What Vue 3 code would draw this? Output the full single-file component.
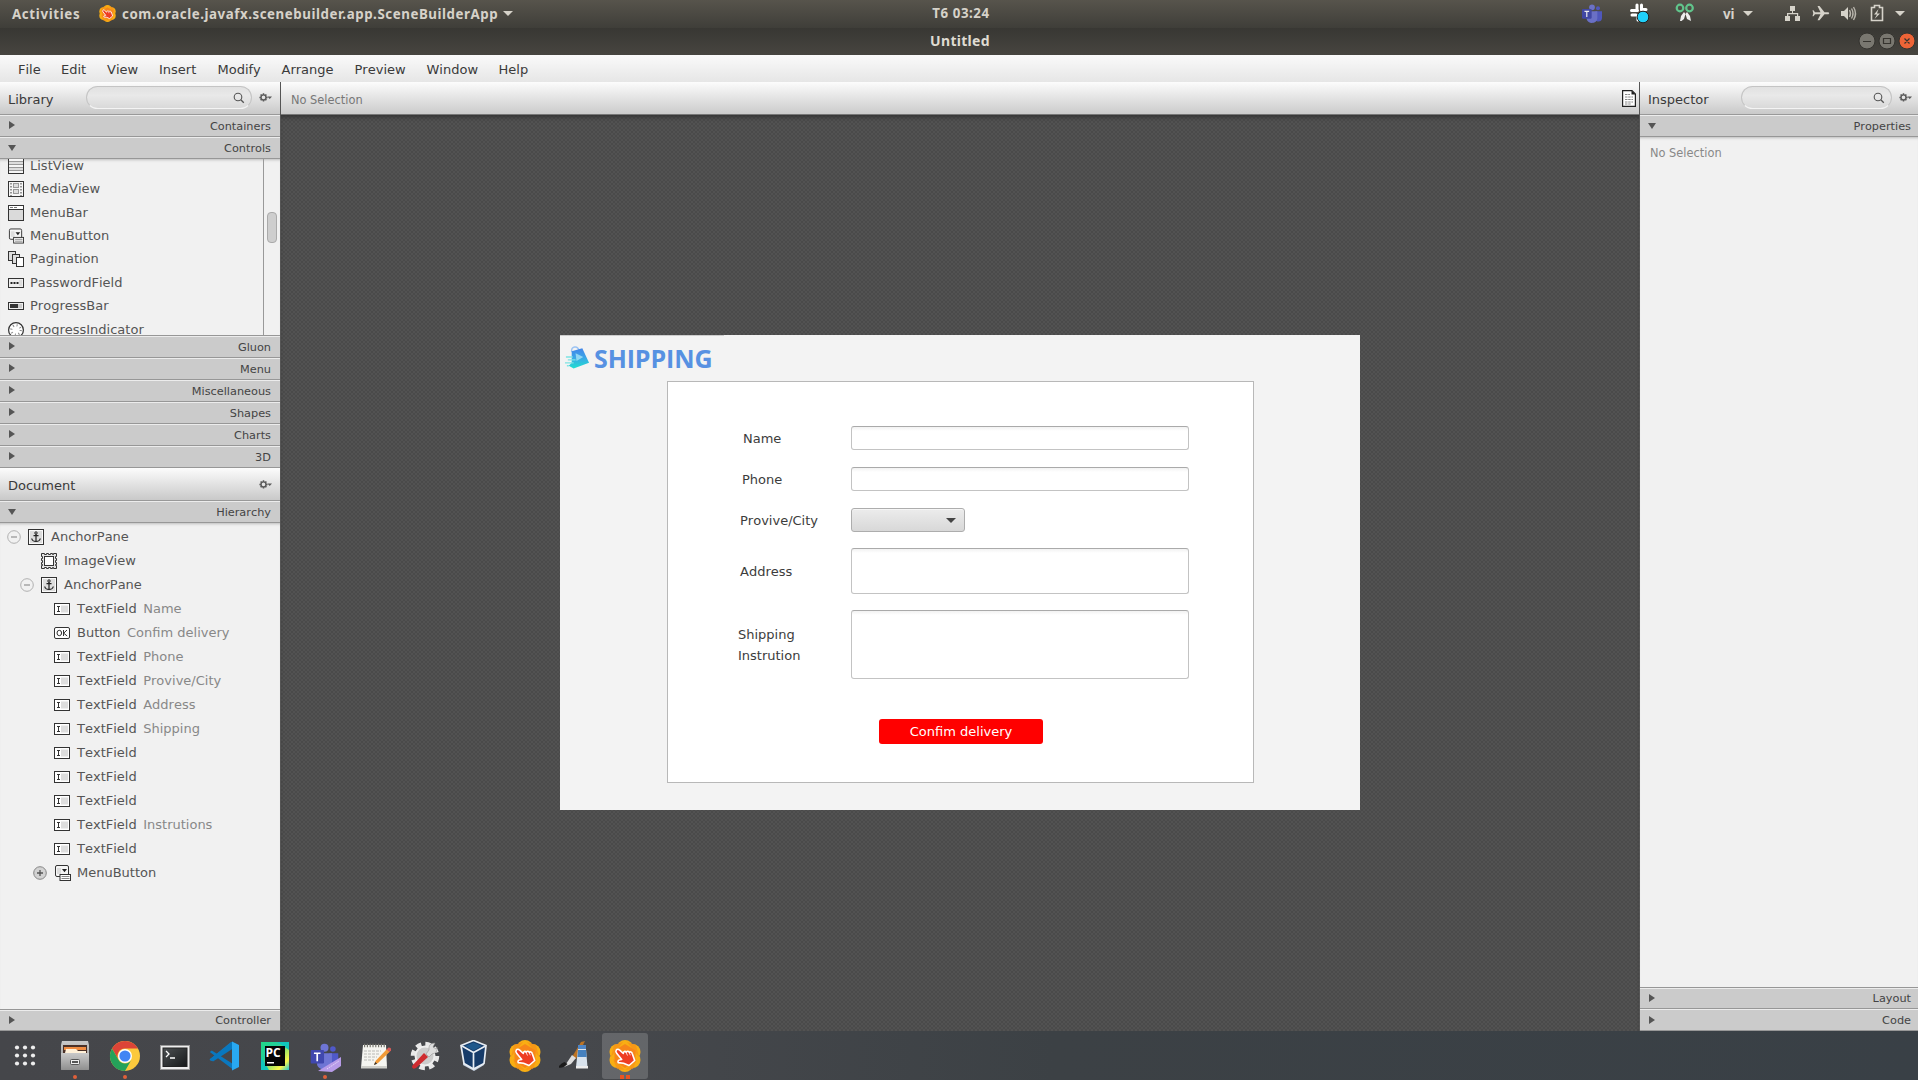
<script setup>
const menus = ['File', 'Edit', 'View', 'Insert', 'Modify', 'Arrange', 'Preview', 'Window', 'Help']
const menuWidths = [43, 46, 52, 58.5, 64, 73, 72, 72, 50]
const controls = [
  ['ListView', 'list'],
  ['MediaView', 'media'],
  ['MenuBar', 'menubar'],
  ['MenuButton', 'menubutton'],
  ['Pagination', 'pages'],
  ['PasswordField', 'password'],
  ['ProgressBar', 'progress'],
  ['ProgressIndicator', 'dial'],
]
const sections = ['Gluon', 'Menu', 'Miscellaneous', 'Shapes', 'Charts', '3D']
const tree = [
  { l: 0, t: 'AnchorPane', i: 'anchor', x: 'minus' },
  { l: 1, t: 'ImageView', i: 'image' },
  { l: 1, t: 'AnchorPane', i: 'anchor', x: 'minus' },
  { l: 2, t: 'TextField', i: 'text', n: 'Name' },
  { l: 2, t: 'Button', i: 'ok', n: 'Confim delivery' },
  { l: 2, t: 'TextField', i: 'text', n: 'Phone' },
  { l: 2, t: 'TextField', i: 'text', n: 'Provive/City' },
  { l: 2, t: 'TextField', i: 'text', n: 'Address' },
  { l: 2, t: 'TextField', i: 'text', n: 'Shipping' },
  { l: 2, t: 'TextField', i: 'text' },
  { l: 2, t: 'TextField', i: 'text' },
  { l: 2, t: 'TextField', i: 'text' },
  { l: 2, t: 'TextField', i: 'text', n: 'Instrutions' },
  { l: 2, t: 'TextField', i: 'text' },
  { l: 2, t: 'MenuButton', i: 'menubutton', x: 'plus' },
]
const dock = ['grid', 'files', 'chrome', 'terminal', 'vscode', 'pycharm', 'teams', 'notes', 'tools', 'vbox', 'scene', 'paint', 'scene']
const running = [1, 2, 6]
</script>

<template>
  <svg width="0" height="0" class="defs">
    <defs>
      <linearGradient id="metal" x1="0" y1="0" x2="0" y2="1"><stop offset="0" stop-color="#c9c9c9" /><stop offset="1" stop-color="#8f8f8f" /></linearGradient>
      <linearGradient id="screen" x1="0" y1="0" x2="1" y2="1"><stop offset="0" stop-color="#4c5052" /><stop offset="1" stop-color="#17191a" /></linearGradient>
      <linearGradient id="pyc" x1="0" y1="0" x2="1" y2="1"><stop offset="0" stop-color="#21d789" /><stop offset=".35" stop-color="#22cf9a" /><stop offset=".55" stop-color="#8be06b" /><stop offset=".8" stop-color="#fcf84a" /><stop offset="1" stop-color="#1fc8d8" /></linearGradient>
      <linearGradient id="bag" x1="0" y1="0" x2="0" y2="1"><stop offset="0" stop-color="#4285e8" /><stop offset=".45" stop-color="#3ba5e8" /><stop offset="1" stop-color="#1fe0cf" /></linearGradient>
      <symbol id="gear" viewBox="0 0 13 9">
        <path d="M4.5 .2v8.4M.4 4.4h8.2M1.6 1.5l5.8 5.8M7.4 1.5L1.6 7.3" stroke="#5a5a5a" stroke-width="1.5" />
        <circle cx="4.5" cy="4.4" r="2.5" fill="#e5e5e5" stroke="#5a5a5a" stroke-width="1.4" /><path d="M8.4 3.4h4.6l-2.3 2.7z" fill="#5a5a5a" />
      </symbol>
      <symbol id="mag" viewBox="0 0 12 12"><circle cx="5" cy="5" r="3.8" fill="none" stroke="#555" stroke-width="1.1" /><path d="M7.8 7.8l3 3" stroke="#555" stroke-width="1.3" /></symbol>
      <symbol id="scene" viewBox="0 0 32 32">
        <g fill="#f9ae13"><circle cx="16" cy="8" r="8" /><circle cx="8.5" cy="12" r="8" /><circle cx="23.5" cy="12" r="8" /><circle cx="8.5" cy="20" r="8" /><circle cx="23.5" cy="20" r="8" /><circle cx="16" cy="24" r="8" /></g>
        <path d="M5 5l9-3-12 15zM27 5l-9-3 12 15zM8 29l8 1-12-11zM24 29l-8 1 12-11z" fill="#f79018" opacity=".75" />
        <path d="M16 4l10.500 6.500v11L16 28 5.500 21.500v-11z" fill="#f7861a" />
        <path d="M7.200 10.200c1-1.500 2.500-1 3.500 0l3.600 3.300c0-2.300 1.900-2.700 2.900-1.300 1-1.400 2.600-1.200 3.100.2 1-.9 2.500-.5 2.800.8l2.600 7.300-5.700 5-5.500-2.300-5.300-.6c-.6-1.500.2-2.600 1.800-2.800l1.700-.3-5-6.300c-.9-1-1.100-2-.5-3z" fill="#ee3d23" stroke="#fff" stroke-width="1.600" stroke-linejoin="round" />
        <path d="M17.200 12.500l1.300 3M20.300 12.700l1 2.600" stroke="#fff" stroke-width=".8" />
      </symbol>
      <symbol id="teams" viewBox="0 0 30 30">
        <circle cx="15" cy="5" r="4.3" fill="#6e75d4" /><circle cx="24" cy="6.5" r="3" fill="#5059c9" />
        <path d="M20 11h10v10c0 6-7 7-10 3z" fill="#5059c9" /><path d="M7 11h16v10c0 9-14 10-16 2z" fill="#6e75d4" />
        <rect x="0" y="7.500" width="14.500" height="14.500" rx="1.200" fill="#4048ae" /><path d="M3.700 11h7M7.200 11v8.500" stroke="#fff" stroke-width="1.800" />
      </symbol>
      <symbol id="i-list" viewBox="0 0 16 16"><path d="M.5.500h15v15H.5z" fill="#f6f6f6" /><path d="M1 4h14v3H1zM1 10h14v3H1z" fill="#ddd" /><path d="M1 3.500h14M1 6.500h14M1 9.500h14M1 12.500h14" stroke="#999" /><rect x=".5" y=".5" width="15" height="15" fill="none" stroke="#333" /></symbol>
      <symbol id="i-media" viewBox="0 0 16 16"><rect x=".5" y=".5" width="15" height="15" fill="#f6f6f6" stroke="#333" /><path d="M3 2v13M13 2v13" stroke="#777" stroke-width="1.500" stroke-dasharray="1.500 1.500" /><rect x="5.500" y="2.500" width="5" height="4" fill="#ddd" stroke="#999" /><rect x="5.500" y="8.500" width="5" height="4" fill="#ddd" stroke="#999" /></symbol>
      <symbol id="i-menubar" viewBox="0 0 16 16"><rect x=".5" y=".5" width="15" height="15" fill="#dadada" stroke="#333" /><path d="M1 1h14v3H1z" fill="#fff" /><path d="M1 4.500h14" stroke="#333" /><path d="M2 2.500h3M6 2.500h3" stroke="#777" /></symbol>
      <symbol id="i-menubutton" viewBox="0 0 17 16"><rect x="1.500" y=".5" width="13" height="11" rx="1.500" fill="#f5f5f5" stroke="#333" /><path d="M3 3h4v6H3z" fill="#ddd" /><path d="M8 4h5l-2.500 3.200z" fill="#222" /><rect x="6" y="9.500" width="10.500" height="6" fill="#fff" stroke="#333" /><path d="M7.500 11.500h8M7.500 13.500h8" stroke="#888" /></symbol>
      <symbol id="i-pages" viewBox="0 0 16 16"><rect x=".5" y=".5" width="7" height="9" fill="#ddd" stroke="#333" /><rect x="4.500" y="3.500" width="7" height="9" fill="#ddd" stroke="#333" /><rect x="8.500" y="6.500" width="7" height="9" fill="#fff" stroke="#333" /></symbol>
      <symbol id="i-password" viewBox="0 0 16 16"><rect x=".5" y="3.500" width="15" height="9" fill="#eee" stroke="#333" /><path d="M2.500 8h8" stroke="#222" stroke-width="2" stroke-dasharray="2 1" /><path d="M11 5h3v6h-3z" fill="#ddd" /></symbol>
      <symbol id="i-progress" viewBox="0 0 16 16"><rect x=".5" y="4.500" width="15" height="7" fill="#eee" stroke="#333" /><path d="M2 6h8v4H2z" fill="#333" /><path d="M10 6h4v4h-4z" fill="#ccc" /></symbol>
      <symbol id="i-dial" viewBox="0 0 16 16"><circle cx="8" cy="8" r="7.400" fill="#fff" stroke="#333" stroke-width="1.200" /><circle cx="8" cy="8" r="4.700" fill="none" stroke="#888" stroke-width="2.200" stroke-dasharray="1 2.700" /></symbol>
      <symbol id="i-anchor" viewBox="0 0 16 16"><rect x=".5" y=".5" width="15" height="15" fill="#fafafa" stroke="#333" /><path d="M2 2h12v12H2z" fill="#ddd" /><circle cx="8" cy="4" r="1.200" fill="none" stroke="#222" /><path d="M8 5v7.500M5.500 6.700h5M3.700 9.500c.5 2.500 2.500 3 4.300 3s3.800-.5 4.300-3" stroke="#222" stroke-width="1.200" fill="none" /></symbol>
      <symbol id="i-image" viewBox="0 0 16 16"><path d="M.5.500h3v1h2v-1h2v1h2v-1h2v1h1v-1h3v3h-1v2h1v2h-1v2h1v2h-1v1h1v3h-3v-1h-1v1h-2v-1h-2v1h-2v-1h-2v1h-3v-3h1v-1h-1v-2h1v-2h-1v-2h1v-2h-1z" fill="#e4e4e4" stroke="#333" /><rect x="3.500" y="3.500" width="9" height="9" fill="#fff" stroke="#333" /></symbol>
      <symbol id="i-text" viewBox="0 0 16 16"><rect x=".5" y="2.500" width="15" height="11" fill="#fff" stroke="#333" /><path d="M7 4.500h7v7H7z" fill="#ddd" /><path d="M3 5.500h3M4.500 5v6M3 10.500h3" stroke="#333" /></symbol>
      <symbol id="i-ok" viewBox="0 0 16 16"><rect x=".5" y="2.500" width="15" height="11" rx="1.500" fill="#fff" stroke="#333" /><ellipse cx="5.300" cy="8" rx="2.300" ry="2.700" fill="none" stroke="#333" /><path d="M9.500 5v6M13 5L9.700 8.200 13.200 11" stroke="#333" fill="none" /></symbol>
    </defs>
  </svg>

  <div class="desktop">
    <header class="topbar">
      <span class="activities">Activities</span>
      <svg class="applogo" width="17" height="17"><use href="#scene" /></svg>
      <span class="appname">com.oracle.javafx.scenebuilder.app.SceneBuilderApp</span>
      <i class="caret"></i>
      <span class="clock">T6 03:24</span>
      <div class="tray">
        <svg width="336" height="28" viewBox="0 0 336 28">
          <g transform="translate(-1 4)" opacity=".9"><svg width="22" height="20" viewBox="0 0 30 30"><use href="#teams" /></svg></g>
          <g stroke="#fff" stroke-width="3" stroke-linecap="round"><path d="M55 5v5M59.500 5v5M49.500 10.500h6M61 9.500h3M50 15h4M59 15h4M56 16v4" /></g>
          <circle cx="61" cy="17" r="5.800" fill="#1fd0fa" stroke="#222" />
          <g fill="none" stroke="#61c58c" stroke-width="2.200"><circle cx="98" cy="8" r="3.300" /><circle cx="107.500" cy="8" r="3.300" /></g>
          <path d="M98 21l1-5 3-4 1.500 2-1.500 5-2.500 2zM109 21l-1-5-3-4-1.500 2 1.500 5z" fill="#eee" />
          <path d="M161 11h10l-5 5zM313 11h10l-5 5z" fill="#d6d3ca" />
          <path d="M208 6h5v5h-5zM203 16h5v5h-5zM213 16h5v5h-5zM210 10h1v4h-1zM205 13h11v1.300h-11zM205 13h1.300v4H205zM215 13h1.200v4H215z" fill="#d6d3ca" />
          <path d="M233 12.300h5.500L235.500 6h2l5 6.300h4q1.500 1-0 2h-4l-5 6h-2l3-6H233l-1.500 2h-1l.8-3-.8-3h1z" fill="#d6d3ca" />
          <path d="M259 11h3l4-4v13l-4-4h-3z" fill="#d6d3ca" /><path d="M267.500 10q2 3.500 0 7M269.500 8.500q3 5 0 10M271.500 7q4 6.500 0 13" fill="none" stroke="#b8b5ac" stroke-width="1.400" />
          <path d="M289.500 8v12.500h11V7.500h-3V5.500h-5v2h-3z" fill="none" stroke="#d6d3ca" stroke-width="1.600" /><path d="M296.500 9l-4.500 5.500h3l-2.500 4.500 5.500-5.500h-3z" fill="#d6d3ca" />
        </svg>
        <span class="lang">vi</span>
      </div>
    </header>

    <div class="titlebar">
      <span>Untitled</span>
      <svg class="winbtns" width="57" height="20" viewBox="0 0 57 20">
        <circle cx="9" cy="9" r="8" fill="#797770" stroke="#34332f" /><circle cx="29" cy="9" r="8" fill="#797770" stroke="#34332f" /><circle cx="49" cy="9" r="8" fill="#ed6437" stroke="#34332f" />
        <path d="M5 9.500h8M25.500 6.500h7v5h-7zM46.500 6.500l5 5M51.500 6.500l-5 5" stroke="#36342f" stroke-width="1.200" fill="none" />
      </svg>
    </div>

    <nav class="menubar"><span v-for="(m, i) in menus" :key="m" :style="{ width: menuWidths[i] + 'px' }">{{ m }}</span></nav>

    <main class="work">
      <aside class="left">
        <div class="head"><b>Library</b><div class="search"><svg width="12" height="12"><use href="#mag" /></svg></div><svg class="gear" width="13" height="9"><use href="#gear" /></svg></div>
        <div class="sec"><i class="right"></i>Containers</div>
        <div class="sec"><i class="down"></i>Controls</div>
        <div class="list">
          <div class="items"><div v-for="c in controls" :key="c[0]" class="item"><svg width="16" height="16"><use :href="'#i-' + c[1]" /></svg>{{ c[0] }}</div></div>
          <div class="scroll"><div class="thumb"></div></div>
        </div>
        <div v-for="s in sections" :key="s" class="sec"><i class="right"></i>{{ s }}</div>
        <div class="head doc"><b>Document</b><svg class="gear" width="13" height="9"><use href="#gear" /></svg></div>
        <div class="sec"><i class="down"></i>Hierarchy</div>
        <div class="tree">
          <div v-for="(n, k) in tree" :key="k" class="node" :style="{ paddingLeft: 7 + n.l * 13 + 'px' }">
            <span class="toggle"><svg v-if="n.x" width="14" height="14" viewBox="0 0 14 14"><circle cx="7" cy="7" r="6.300" :fill="n.x === 'plus' ? '#d2d2d2' : '#f1f1f1'" :stroke="n.x === 'plus' ? '#868686' : '#b0b0b0'" /><path :d="n.x === 'plus' ? 'M4 7h6M7 4v6' : 'M4 7h6'" :stroke="n.x === 'plus' ? '#555' : '#999'" stroke-width="1.300" /></svg></span>
            <svg class="ni" :class="{ wide: n.i === 'menubutton' }" :width="n.i === 'menubutton' ? 17 : 16" height="16"><use :href="'#i-' + n.i" /></svg>
            <span class="nt">{{ n.t }}</span><span class="nn">{{ n.n }}</span>
          </div>
        </div>
        <div class="sec first"><i class="right"></i>Controller</div>
      </aside>

      <section class="center">
        <div class="crumb"><span>No Selection</span>
          <svg width="14" height="17" viewBox="0 0 14 17"><path d="M.6.600H10l3.400 3.400v12.400H.6z" fill="#fff" stroke="#222" stroke-width="1.200" /><path d="M9.500.600v4h4z" fill="#222" /><path d="M3 4.500h5M3 7h8M3 9.500h8M3 12h8M3 14h6" stroke="#888" stroke-dasharray="2.500 .7" /></svg>
        </div>
        <div class="canvas">
          <div class="artboard">
            <div class="brand">
              <svg width="26" height="26" viewBox="0 0 27 26"><path d="M8 7C7 1 14-1 16 6" fill="none" stroke="#9cc3f3" stroke-width="1.500" /><path d="M8 6l11-3 7 15-16 6-5-3 3-3z" fill="url(#bag)" /><path d="M2 12h7M4 15h8M1 18h9M3 21h2" stroke="#7de4e4" stroke-width="1.400" /><path d="M12 8l8 4-7 4z" fill="#a6e3f5" opacity=".8" /></svg>
              <span>SHIPPING</span>
            </div>
            <div class="panel">
              <div class="row name"><label>Name</label><div class="field"></div></div>
              <div class="row phone"><label>Phone</label><div class="field"></div></div>
              <div class="row city"><label>Provive/City</label><div class="combo"><i></i></div></div>
              <div class="row addr"><label>Address</label><div class="field"></div></div>
              <div class="row ship"><label>Shipping<br>Instrution</label><div class="field"></div></div>
              <button>Confim delivery</button>
            </div>
          </div>
        </div>
      </section>

      <aside class="inspector">
        <div class="head"><b>Inspector</b><div class="search"><svg width="12" height="12"><use href="#mag" /></svg></div><svg class="gear" width="13" height="9"><use href="#gear" /></svg></div>
        <div class="sec"><i class="down"></i>Properties</div>
        <div class="body">No Selection</div>
        <div class="sec first"><i class="right"></i>Layout</div>
        <div class="sec low"><i class="right"></i>Code</div>
      </aside>
    </main>

    <footer class="dock">
      <div v-for="(d, k) in dock" :key="k" class="app" :class="{ active: k === 12 }">
        <svg width="32" height="32" viewBox="0 0 32 32">
          <g v-if="d === 'grid'" fill="#eee"><template v-for="r in 3" :key="r"><circle v-for="c in 3" :key="c" :cx="c * 8" :cy="r * 8 - .5" r="2.100" /></template></g>
          <g v-else-if="d === 'files'"><path d="M3 1h26l1 4v24q0 1-1 1H3q-1 0-1-1V5z" fill="url(#metal)" /><path d="M4 5h24v8H4z" fill="#4b3128" /><path d="M5 7h22v3H5z" fill="#ef8c42" /><path d="M7 9h10l2 2h8v2H6z" fill="#fff0d8" /><path d="M2 13h28v16q0 1-1 1H3q-1 0-1-1z" fill="url(#metal)" /><rect x="11.500" y="19.500" width="9" height="5" rx="1" fill="#eee" stroke="#555" /><path d="M13 22h6" stroke="#555" stroke-width="2" /></g>
          <g v-else-if="d === 'chrome'"><circle cx="16" cy="16" r="15" fill="#fbc93d" /><path d="M3 8.500A15 15 0 0 1 29 8.500H16a7.500 7.500 0 0 0-6.500 11.300z" fill="#dc4437" /><path d="M3 8.500A15 15 0 0 0 16 31l6.500-11.200a7.500 7.500 0 0 1-13 0z" fill="#25a25a" /><circle cx="16" cy="16" r="7" fill="#fff" /><circle cx="16" cy="16" r="5.600" fill="#4285f4" /></g>
          <g v-else-if="d === 'terminal'"><rect x="1.500" y="5.500" width="29" height="24" fill="#eee" stroke="#999" /><rect x="4" y="8" width="24" height="18.500" fill="url(#screen)" stroke="#222" /><path d="M7 11l3 3-3 3M11 18h5" fill="none" stroke="#fff" stroke-width="1.300" /></g>
          <g v-else-if="d === 'vscode'"><path d="M24 2L5 20l-3 1-1.500-1.500L22 2z" fill="#1379bd" /><path d="M.8 12l2-1.500L24 24v5.500z" fill="#0a78bf" /><path d="M24 1.500v7L4 21.500 1 19z" fill="#0878bf" /><path d="M23 1.500l7 3.500v22l-7 3.500z" fill="#29a9f2" /></g>
          <g v-else-if="d === 'pycharm'"><path d="M2 2h28v28H2z" fill="url(#pyc)" /><path d="M2 17l8 13H2zM30 2v8l-12-8z" fill="#10c7bd" /><path d="M6 6h20v20H6z" fill="#050505" /><text x="6.500" y="17" class="pc">PC</text><path d="M8 22h7v1.500H8z" fill="#fff" /></g>
          <g v-else-if="d === 'teams'"><svg x="1" y="3" width="29" height="28" viewBox="0 0 30 30"><use href="#teams" /></svg><path d="M9 31L32 17v9l-9 6z" fill="#b79be8" /><path d="M18 29l12-8" stroke="#e6dcf7" stroke-dasharray="1.500 1" /></g>
          <g v-else-if="d === 'notes'"><path d="M4 5h23l1 23H2z" fill="#f5f5f1" /><path d="M2 26h26v2.500H2z" fill="#cfcfca" /><path d="M5 5.500h21" stroke="#77776f" stroke-width="3.500" stroke-dasharray="1.200 1.600" /><path d="M5 11h17M5 14h15M5 17h13M5 20h10" stroke="#b9b9b5" stroke-dasharray="3 1" /><path d="M15 25l1.500-4L28 9l3 2.500-12 11.500z" fill="#f29b38" /><path d="M27.500 9.500l2-2q3-0 3 2.500l-2 2z" fill="#d85b58" /><path d="M15 25l1.200-3 2 1.800z" fill="#333" /></g>
          <g v-else-if="d === 'tools'"><circle cx="16" cy="16" r="11.500" fill="none" stroke="#e8e8e8" stroke-width="5.500" stroke-dasharray="5.200 3.830" /><circle cx="16" cy="16" r="9.500" fill="#ccc" stroke="#eee" stroke-width="2" /><path d="M3 26L15 13l4 4L7 28q-4 2-4-2z" fill="#cf2b2f" /><path d="M17 14l3-4q-1-7 6-7l-2 4 3 2 1-2q1 6-5 7l-3 3z" fill="#ddd" stroke="#888" stroke-width=".5" /></g>
          <g v-else-if="d === 'vbox'" transform="translate(-1 0)"><path d="M6 20l-1 5 11 6 10-6-1-6z" fill="#c8d5e4" /><path d="M3 5.500L15.500.500 28 5.500l-2 18L15.500 29 6 23.500z" fill="#163b69" stroke="#e8edf3" stroke-width="1.700" /><path d="M4 6l11.500 6.500V28M27.500 6l-12 6.500" fill="none" stroke="#e8edf3" stroke-width="1.700" /><path d="M7 6l8.500-3.500L24 6l-8.500 4.500z" fill="#1f588c" /></g>
          <use v-else-if="d === 'scene'" href="#scene" />
          <g v-else transform="translate(-1 0)"><path d="M14 17L23 2l4-1L18 19z" fill="#bd7424" /><path d="M14 15l4 3-5 6-7 3z" fill="#ddd" /><path d="M0 27.500q3-4.500 6.500-5.500l3 2q-4 4.500-9.500 3.500z" fill="#1b1b1b" /><path d="M20 5h8v5h-8z" fill="#4f86c6" /><path d="M20 9h8l1.500 18H18z" fill="#d9e3ed" /><path d="M20 10h8l.7 7h-9.200z" fill="#4681be" /><path d="M18 26h12v2.500H18z" fill="#eee" /></g>
        </svg>
        <div v-if="running.includes(k)" class="dots"><i></i></div>
        <div v-if="k === 12" class="dots sq"><i></i><i></i></div>
      </div>
    </footer>
  </div>
</template>

<style>
body { margin: 0; overflow: hidden; }
</style>

<style scoped>
* { box-sizing: border-box; }
.defs { position: absolute; }
.desktop { width: 1918px; height: 1080px; display: flex; flex-direction: column; font: 13px/16px "DejaVu Sans", sans-serif; font-kerning: none; color: #4b4b4b; overflow: hidden; }
.topbar { position: relative; height: 28px; flex: none; display: flex; align-items: center; padding: 0 0 1px 12px; background: linear-gradient(#57544c, #3f3e39); color: #d6d2c9; font: bold 13.3px/20px "Noto Sans", sans-serif; letter-spacing: .55px; }
.activities { width: 87px; letter-spacing: .65px; }
.applogo { margin-right: 6px; flex: none; }
.appname { width: 377px; white-space: nowrap; letter-spacing: .56px; }
.caret { margin-left: 4px; border: 5px solid transparent; border-top-color: #d6d2c9; border-bottom: 0; }
.clock { position: absolute; left: 0; right: 0; top: 3px; padding-left: 4px; text-align: center; }
.tray { position: absolute; left: 1582px; top: 0; width: 336px; height: 28px; }
.lang { position: absolute; left: 141px; top: 4px; letter-spacing: 0; }
.titlebar { position: relative; height: 27px; flex: none; background: linear-gradient(#383733, #474540); color: #dfdbd2; text-align: center; font: bold 14px/25px "Noto Sans", sans-serif; padding-left: 2px; letter-spacing: .3px; }
.winbtns { position: absolute; right: 3px; top: 4px; }
.menubar { height: 27px; flex: none; display: flex; padding: 7px 0 0 18px; background: linear-gradient(#fafafa, #e6e6e6); color: #3a3a3a; }
.menubar span { white-space: nowrap; flex: none; }
.work { height: 949px; flex: none; display: flex; }
.left { width: 280px; display: flex; flex-direction: column; background: #f1f1f1; }
.head { height: 33px; flex: none; display: flex; align-items: center; background: linear-gradient(#fcfcfc, #c9c9c9); border-bottom: 1px solid #999; padding: 2px 8px 0; color: #3a3a3a; }
.head b { font-weight: 400; width: 78px; padding-top: 2px; }
.search { width: 166px; height: 23px; margin-top: -3px; border-radius: 12px; border: 1px solid #c4c4c4; border-bottom: 1px solid #f4f4f4; background: linear-gradient(#e1e1e1, #e9e9e9 40%, #d9d9d9); display: flex; justify-content: flex-end; padding: 5px 6px; }
.gear { margin-left: auto; margin-top: -3px; flex: none; }
.doc .gear { margin-top: -2px; }
.sec { height: 22px; flex: none; display: flex; align-items: center; justify-content: space-between; padding: 1px 9px 0; background: #cbcbcb; border-top: 1px solid #ececec; border-bottom: 1px solid #979797; font-size: 11.3px; line-height: 16px; color: #444; }
.sec.first { border-top: 1px solid #979797; box-shadow: inset 0 1px #ececec; padding-top: 2px; }
.sec.low { padding-top: 2px; }
.right { border: 4px solid transparent; border-left: 6px solid #555; border-right: 0; margin-top: -3px; }
.down { border: 4px solid transparent; border-top: 6px solid #555; border-bottom: 0; margin-left: -1px; margin-top: -2px; }
.list { height: 177px; flex: none; display: flex; overflow: hidden; border-bottom: 1px solid #979797; color: #555; box-shadow: inset 0 3px 3px -2px #bbb; }
.items { width: 263px; margin-top: -5px; }
.item { height: 23.450px; display: flex; align-items: center; gap: 6px; padding-left: 8px; }
.scroll { width: 17px; border-left: 1px solid #999; padding: 53px 0 0 3px; }
.thumb { width: 10px; height: 31px; border: 1px solid #aaa; border-radius: 4px; background: #cecece; }
.tree { flex: 1; padding-top: 2px; box-shadow: inset 0 3px 3px -2px #bbb; }
.node { height: 24px; display: flex; align-items: center; white-space: nowrap; color: #555; }
.toggle { width: 21px; height: 14px; flex: none; display: flex; }
.ni { flex: none; margin-right: -1px; margin-top: -1px; }
.ni.wide { margin-right: -2px; }
.nt { margin-left: 8px; }
.nn { margin-left: 6.500px; color: #888; }
.center { width: 1360px; display: flex; flex-direction: column; border-left: 1px solid #555; border-right: 1px solid #555; }
.crumb { height: 33px; flex: none; display: flex; align-items: center; justify-content: space-between; padding: 1px 3px 0 10px; background: linear-gradient(#fcfcfc, #cbcbcb); border-bottom: 1px solid #777; color: #777; font-size: 11.400px; }
.crumb span { padding-top: 2px; }
.crumb svg { margin-top: -1px; }
.canvas { flex: 1; display: flex; justify-content: center; padding-top: 220px; box-shadow: inset 0 4px 4px -2px #333; background: repeating-conic-gradient(#4a4a4a 0 25%, #525252 0 50%) 0 0 / 4px 4px; }
.artboard { width: 800px; height: 475px; background: #f3f3f3; display: flex; flex-direction: column; }
.brand { width: 164px; height: 46px; border-top: 1px solid #ccc; display: flex; align-items: flex-start; padding: 9px 0 0 4px; gap: 4px; color: #5791e2; font: bold 25px/27px "Open Sans", sans-serif; flex: none; }
.brand span { letter-spacing: -.1px; }
.panel { width: 587px; height: 402px; margin-left: 107px; background: #fff; border: 1px solid #b8b8b8; padding-top: 44px; color: #3c3c3c; }
.row { display: flex; align-items: center; }
.row label { line-height: 21px; }
.name { padding-left: 75px; }
.name label { width: 108px; }
.phone { padding-left: 74px; margin-top: 17px; }
.phone label { width: 109px; }
.city { padding-left: 72px; margin-top: 17px; }
.city label { width: 111px; }
.addr { padding-left: 72px; margin-top: 16px; }
.addr label { width: 111px; }
.ship { padding-left: 70px; margin-top: 16px; }
.ship label { width: 113px; }
.field { width: 338px; height: 24px; border: 1px solid #c3c3c3; border-top-color: #aaa; border-radius: 3px; background: linear-gradient(#f2f2f2, #fff 4px); }
.addr .field { height: 46px; }
.ship .field { height: 69px; }
.combo { width: 114px; height: 24px; border: 1px solid #adadad; border-radius: 3px; background: linear-gradient(#ececec, #d8d8d8); display: flex; justify-content: flex-end; align-items: center; padding-right: 8px; box-shadow: inset 0 1px #f6f6f6; }
.combo i { border: 5px solid transparent; border-top-color: #444; border-bottom: 0; }
button { display: block; width: 164px; height: 25px; margin: 40px 0 0 211px; padding: 0; border: 0; border-radius: 3px; background: #f00; color: #fff; font: 13px/25px "DejaVu Sans", sans-serif; }
.inspector { width: 278px; display: flex; flex-direction: column; background: #f1f1f1; }
.inspector .head b { width: 93px; }
.inspector .search { width: 151px; }
.inspector .head { padding-right: 6px; }
.inspector .sec { padding-right: 7px; }
.body { flex: 1; padding: 8px 10px; font-size: 11.400px; color: #888; box-shadow: inset 0 3px 3px -2px #bbb; }
.dock { flex: 1; display: flex; background: linear-gradient(90deg, #45464a, #46484c 30%, #3c4145 55%, #394046); }
.app { position: relative; width: 50px; height: 49px; display: flex; justify-content: center; padding-top: 9px; }
.active::before { content: ""; position: absolute; left: 2px; top: 2px; width: 46px; height: 46px; border-radius: 3px; background: #ffffff2b; }
.app > svg { position: relative; }
.dots { position: absolute; left: 0; right: 0; bottom: 1px; display: flex; justify-content: center; gap: 2px; }
.dots i { width: 4px; height: 4px; border-radius: 50%; background: #e0603a; }
.sq i { border-radius: 0; background: #ea5420; }
.pc { font: bold 12px "Open Sans", sans-serif; fill: #fff; letter-spacing: 0; }
</style>
